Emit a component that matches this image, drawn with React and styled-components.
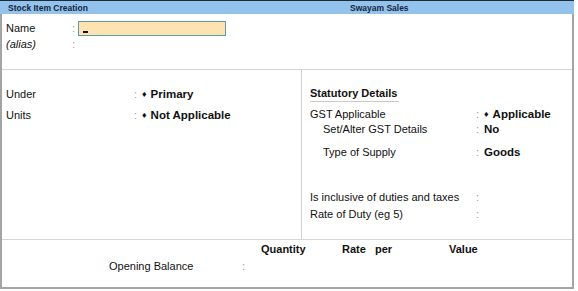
import React from 'react';
import styled, { createGlobalStyle } from 'styled-components';

const Global = createGlobalStyle`
body {
  margin: 0;
  background: #ffffff;
  font-family: "Liberation Sans", Arial, sans-serif;
  color: #111;
}
`
const Frame = styled.div`
width: 570px;
height: 287px;
display: flex;
flex-direction: column;
border-left: 2px solid #a4a4a4;
border-right: 2px solid #a4a4a4;
border-bottom: 2px solid #a4a4a4;
`
const Header = styled.div`
height: 13px;
flex: none;
display: flex;
align-items: center;
background: #93c3ec;
border-top: 1px solid #1d2b3a;
margin: 0 -2px 0 -2px;
padding-left: 8px;
font-size: 8.5px;
font-weight: bold;
color: #14243a;
`
const Title = styled.div`
width: 342px;
`
const Company = styled.div`
flex: 1;
`
const Top = styled.div`
height: 49px;
flex: none;
padding: 6px 0 0 4px;
border-bottom: 1px solid #d6d6d6;
`
const Row = styled.div`
display: flex;
align-items: center;
height: ${p => p.h || 15}px;
margin-top: ${p => p.top || 0}px;
padding-left: ${p => p.indent || 0}px;
font-size: 11px;
`
const Label = styled.div`
width: ${p => p.w}px;
font-style: ${p => p.italic ? 'italic' : 'normal'};
white-space: nowrap;
`
const Colon = styled.span`
width: 8px;
color: #9a9a9a;
`
const Value = styled.span`
font-weight: bold;
font-size: 11.5px;
display: flex;
align-items: center;
`
const Diamond = styled.span`
font-size: 9px;
margin-right: 4px;
`
const NameInput = styled.div`
width: 146px;
height: 13px;
margin-left: -2px;
background: #fde3b1;
border: 1px solid #5c9c9e;
position: relative;
`
const Cursor = styled.span`
position: absolute;
left: 4px;
bottom: 2px;
width: 5px;
height: 2px;
background: #111;
`
const Middle = styled.div`
height: 169px;
flex: none;
display: grid;
grid-template-columns: 299px 1fr;
border-bottom: 1px solid #d6d6d6;
`
const LeftCol = styled.div`
padding: 16px 0 0 4px;
`
const RightCol = styled.div`
border-left: 1px solid #cfcfcf;
padding: 13px 0 0 8px;
`
const Heading = styled.div`
display: inline-block;
font-size: 11px;
font-weight: bold;
line-height: 15px;
padding-right: 2px;
border-bottom: 1px solid #c9c9c9;
`
const Bottom = styled.div`
flex: 1;
padding-top: 1px;
`
const ColHeads = styled.div`
display: flex;
height: 15px;
align-items: center;
padding-left: 259px;
font-size: 11px;
font-weight: bold;
`
const ColHead = styled.span`
width: ${p => p.w}px;
`

export default function App() {
  return (
    <>
      <Global />
      <Frame>
        <Header>
          <Title>Stock Item Creation</Title>
          <Company>Swayam Sales</Company>
        </Header>
        <Top>
          <Row h={16}>
            <Label w={66}>Name</Label>
            <Colon>:</Colon>
            <NameInput><Cursor /></NameInput>
          </Row>
          <Row h={16}>
            <Label w={66} italic>(alias)</Label>
            <Colon>:</Colon>
          </Row>
        </Top>
        <Middle>
          <LeftCol>
            <Row>
              <Label w={128}>Under</Label>
              <Colon>:</Colon>
              <Value><Diamond>♦</Diamond>Primary</Value>
            </Row>
            <Row top={6}>
              <Label w={128}>Units</Label>
              <Colon>:</Colon>
              <Value><Diamond>♦</Diamond>Not Applicable</Value>
            </Row>
          </LeftCol>
          <RightCol>
            <Heading>Statutory Details</Heading>
            <Row top={4}>
              <Label w={166}>GST Applicable</Label>
              <Colon>:</Colon>
              <Value><Diamond>♦</Diamond>Applicable</Value>
            </Row>
            <Row indent={13}>
              <Label w={153}>Set/Alter GST Details</Label>
              <Colon>:</Colon>
              <Value>No</Value>
            </Row>
            <Row top={8} indent={13}>
              <Label w={153}>Type of Supply</Label>
              <Colon>:</Colon>
              <Value>Goods</Value>
            </Row>
            <Row top={30}>
              <Label w={166}>Is inclusive of duties and taxes</Label>
              <Colon>:</Colon>
            </Row>
            <Row top={2}>
              <Label w={166}>Rate of Duty (eg 5)</Label>
              <Colon>:</Colon>
            </Row>
          </RightCol>
        </Middle>
        <Bottom>
          <ColHeads>
            <ColHead w={81}>Quantity</ColHead>
            <ColHead w={33}>Rate</ColHead>
            <ColHead w={74}>per</ColHead>
            <ColHead w={40}>Value</ColHead>
          </ColHeads>
          <Row top={2} indent={107}>
            <Label w={133}>Opening Balance</Label>
            <Colon>:</Colon>
          </Row>
        </Bottom>
      </Frame>
    </>
  );
}
